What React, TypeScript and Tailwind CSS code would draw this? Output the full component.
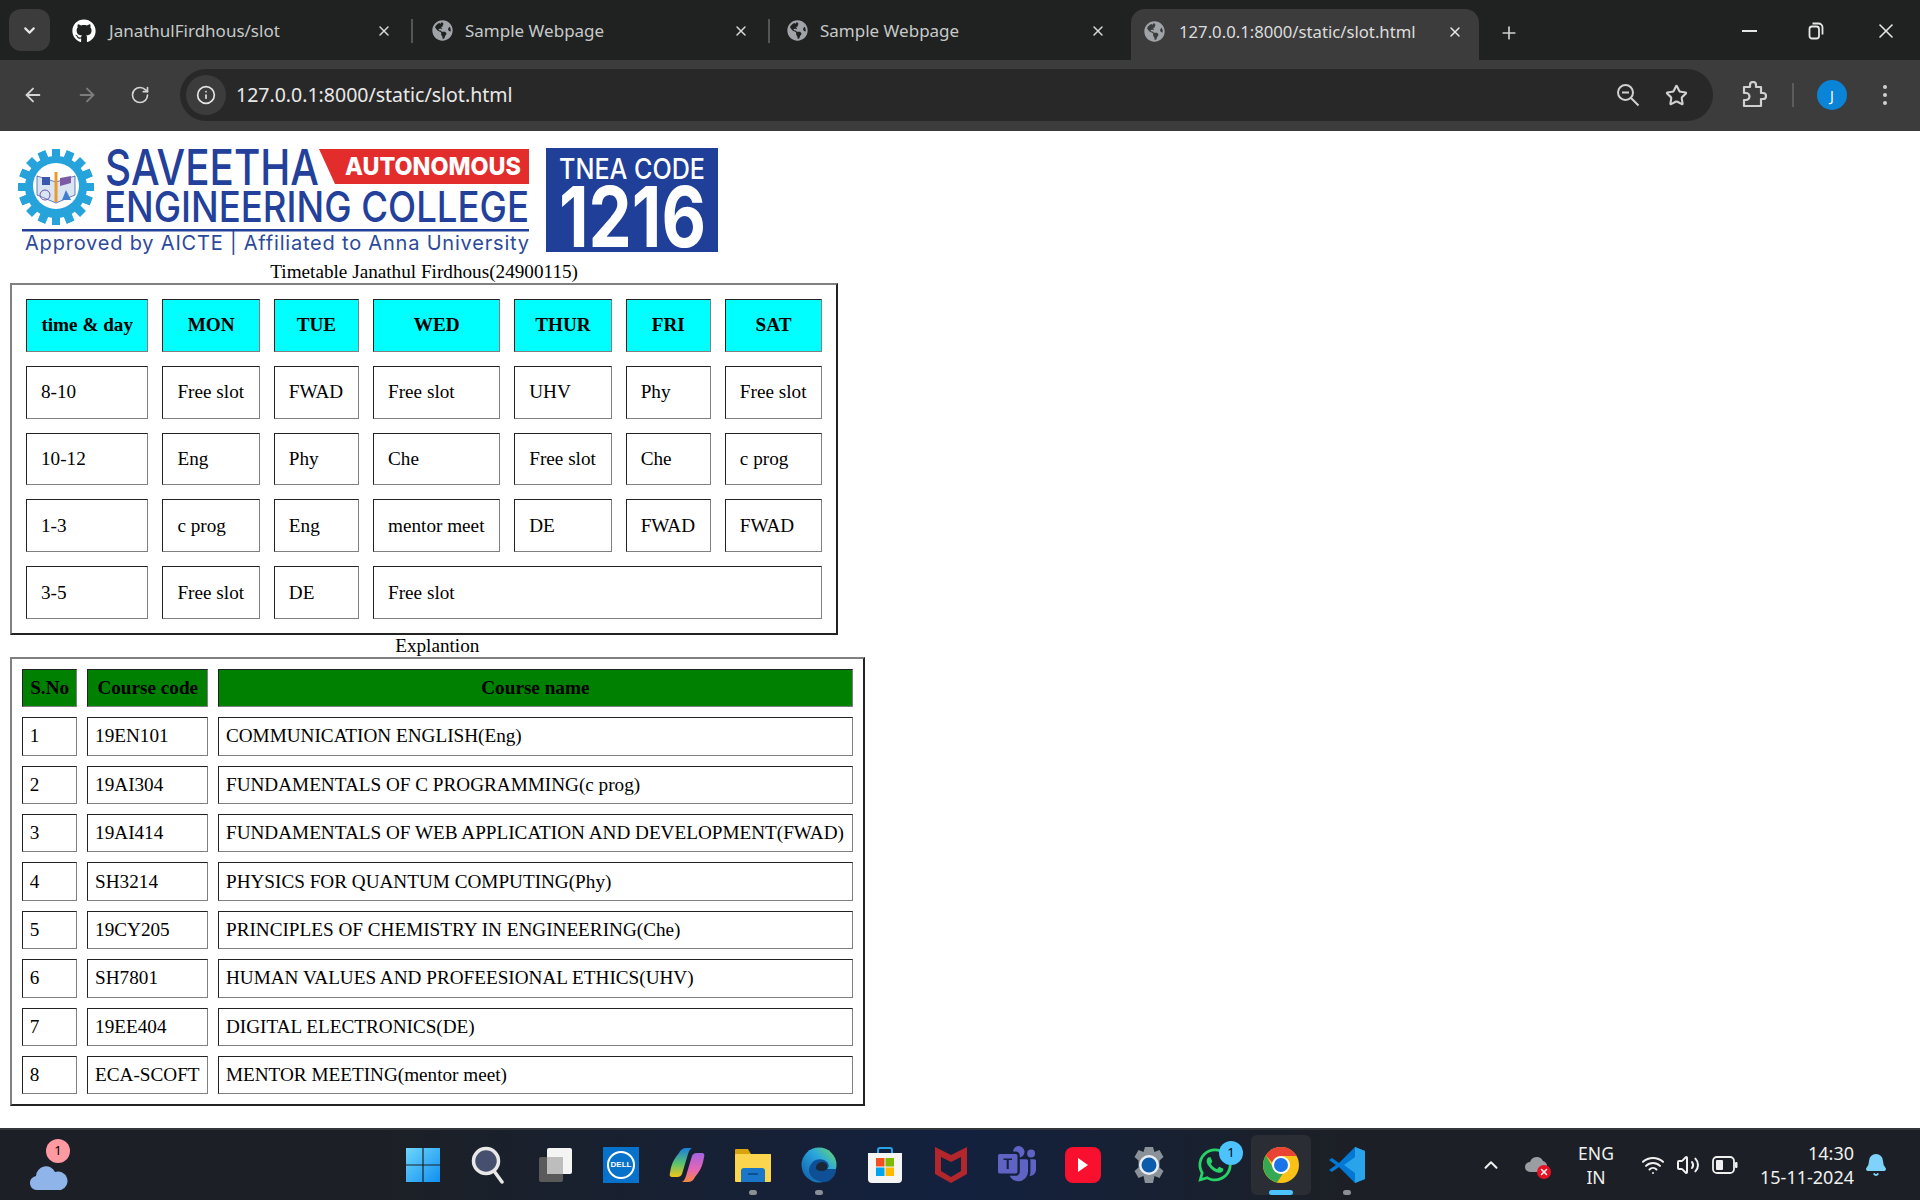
import React from 'react';
import { ArrowLeft, ArrowRight, Bell, ChevronDown, ChevronUp, Info, Plus, RotateCw, Star, Volume2, Wifi, X } from 'lucide-react';
import { FaGithub, FaGlobeAmericas, FaWhatsapp } from 'react-icons/fa';
import { BsMicrosoftTeams } from 'react-icons/bs';

const serif = "font-['Liberation_Serif','Times_New_Roman',serif]";
const ui = "font-['Noto_Sans','Open_Sans',sans-serif]";

const cellBorder = 'border border-t-[#222] border-l-[#222] border-r-[#808080] border-b-[#808080]';
const tableBorder = 'border-2 border-t-[#808080] border-l-[#808080] border-r-[#222] border-b-[#222]';

const timetable = [
  [['8-10'], ['Free slot'], ['FWAD'], ['Free slot'], ['UHV'], ['Phy'], ['Free slot']],
  [['10-12'], ['Eng'], ['Phy'], ['Che'], ['Free slot'], ['Che'], ['c prog']],
  [['1-3'], ['c prog'], ['Eng'], ['mentor meet'], ['DE'], ['FWAD'], ['FWAD']],
  [['3-5'], ['Free slot'], ['DE'], ['Free slot', 4]],
] as [string, number?][][];

const courses = [
  ['1', '19EN101', 'COMMUNICATION ENGLISH(Eng)'],
  ['2', '19AI304', 'FUNDAMENTALS OF C PROGRAMMING(c prog)'],
  ['3', '19AI414', 'FUNDAMENTALS OF WEB APPLICATION AND DEVELOPMENT(FWAD)'],
  ['4', 'SH3214', 'PHYSICS FOR QUANTUM COMPUTING(Phy)'],
  ['5', '19CY205', 'PRINCIPLES OF CHEMISTRY IN ENGINEERING(Che)'],
  ['6', 'SH7801', 'HUMAN VALUES AND PROFEESIONAL ETHICS(UHV)'],
  ['7', '19EE404', 'DIGITAL ELECTRONICS(DE)'],
  ['8', 'ECA-SCOFT', 'MENTOR MEETING(mentor meet)'],
];

const Tab = ({ title, icon, width, closeGap = 'mr-[19px]', sep = true }: { title: string; icon: React.ReactNode; width: string; closeGap?: string; sep?: boolean }) => (
  <div className={`flex h-[51px] items-center pb-[8px] pl-[19px] text-[#c7c9c9] ${width}`}>
    <span className="flex shrink-0">{icon}</span>
    <span className="flex-1 text-[17px]">{title}</span>
    <X size={16} strokeWidth={2.2} className={`text-[#d8d8d8] ${closeGap}`} />
    {sep && <span className="h-[24px] w-[2px] bg-[#555]" />}
  </div>
);

const ExtensionIcon = () => (
  <svg width="26" height="28" viewBox="0 0 26 28" fill="none" stroke="currentColor" strokeWidth="2.2" strokeLinejoin="round">
    <path d="M3 6h6V4a3 3 0 0 1 6 0v2h5v6h2a3 3 0 0 1 0 6h-2v7H3v-6h2a3.500 3.500 0 0 0 0-7H3z" />
  </svg>
);

const ZoomOutIcon = () => (
  <svg width="24" height="24" viewBox="0 0 24 24" fill="none" stroke="currentColor" strokeWidth="2">
    <circle cx="9.500" cy="9.500" r="7.500" />
    <path d="M6 9.500h7M15 15l7.500 7.500" />
  </svg>
);

const ChromeBar = () => (
  <div className={`${ui} shrink-0`}>
    <div className="flex h-[60px] items-end bg-[#202221] pl-[9px]">
      <div className="mb-[9px] flex h-[42px] w-[41px] items-center justify-center rounded-[12px] bg-[#3c3c3c]">
        <ChevronDown size={17} strokeWidth={3} className="text-[#e6e6e6]" />
      </div>
      <Tab title="JanathulFirdhous/slot" width="w-[363px]" icon={<FaGithub size={24} className="ml-[3px] mr-[13px] text-white" />} />
      <Tab title="Sample Webpage" width="w-[357px]" icon={<FaGlobeAmericas size={21} className="mr-[12px] text-[#a0a4a8]" />} />
      <Tab title="Sample Webpage" width="w-[361px]" closeGap="mr-[25px]" sep={false} icon={<FaGlobeAmericas size={21} className="ml-[-2px] mr-[12px] text-[#a0a4a8]" />} />
      <div className="flex h-[51px] w-[348px] items-center rounded-t-[14px] bg-[#3c3c3c] pb-[6px] pl-[13px] text-[#dcdcdc]">
        <span className="flex w-[24px] shrink-0"><FaGlobeAmericas size={21} className="text-[#a0a4a8]" /></span>
        <span className="ml-[11px] flex-1 text-[16.700px]">127.0.0.1:8000/static/slot.html</span>
        <X size={16} strokeWidth={2.2} className="mr-[16px] text-[#e8e8e8]" />
      </div>
      <Plus size={20} strokeWidth={2} className="mb-[17px] ml-[20px] text-[#cfcfcf]" />
      <div className="mb-[17px] ml-auto flex items-center text-[#e6e6e6]">
        <span className="mr-[51px] h-[2px] w-[15px] bg-[#e6e6e6]" />
        <svg width="16" height="18" viewBox="0 0 16 18" fill="none" stroke="currentColor" strokeWidth="1.8" className="mr-[50px]">
          <rect x="1.500" y="4.500" width="9.500" height="12" rx="2.500" />
          <path d="M4.500 1.500h6a4 4 0 0 1 4 4v7" />
        </svg>
        <X size={24} strokeWidth={1.600} className="mr-[22px]" />
      </div>
    </div>
    <div className="flex h-[71px] items-start bg-[#3c3c3c] pt-[9px]">
      <div className="flex h-[52px] w-[180px] items-center gap-[32px] pl-[22px] text-[#d4d4d4]">
        <ArrowLeft size={22} />
        <ArrowRight size={22} className="text-[#7d7d7d]" />
        <RotateCw size={20} />
      </div>
      <div className="flex h-[52px] w-[1533px] items-center rounded-full bg-[#282828] pl-[6px] pr-[25px]">
        <span className="flex h-[40px] w-[40px] items-center justify-center rounded-full bg-[#3c3c3c]">
          <Info size={20} className="text-[#e4e4e4]" />
        </span>
        <span className="ml-[10px] flex-1 text-[19.500px] text-[#e8e8e8]">127.0.0.1:8000/static/slot.html</span>
        <span className="mr-[25px] text-[#d0d0d0]"><ZoomOutIcon /></span>
        <Star size={23} strokeWidth={2.200} className="text-[#d0d0d0]" />
      </div>
      <div className="flex h-[52px] flex-1 items-center pl-[28px] text-[#d0d0d0]">
        <ExtensionIcon />
        <span className="ml-[25px] h-[24px] w-[2px] bg-[#5c5c5c]" />
        <span className="ml-[23px] flex h-[30px] w-[30px] items-center justify-center rounded-full bg-[#0a84d6] text-[14px] text-white">J</span>
        <span className="ml-[36px] flex flex-col gap-[4px]">
          <i className="h-[4px] w-[4px] rounded-full bg-[#d0d0d0]" />
          <i className="h-[4px] w-[4px] rounded-full bg-[#d0d0d0]" />
          <i className="h-[4px] w-[4px] rounded-full bg-[#d0d0d0]" />
        </span>
      </div>
    </div>
  </div>
);

const Logo = () => (
  <svg width="712" height="120" viewBox="10 141 712 120" className="block font-['Inter','Noto_Sans',sans-serif]">
    <g fill="#27a3dc">
      {Array.from({ length: 16 }, (_, i) => (
        <rect key={i} x="52" y="149" width="8" height="76" transform={`rotate(${i * 22.500} 56 187)`} />
      ))}
    </g>
    <circle cx="56" cy="187" r="31" fill="#27a3dc" />
    <circle cx="56" cy="186" r="23" fill="#fff" />
    <path d="M37 176l19 6 19-6v19l-19 8-19-8z" fill="#dbe4f3" stroke="#2c4a9a" strokeWidth="0.700" />
    <rect x="42" y="177" width="8" height="8" fill="#3857b0" />
    <path d="M60 178l11-2v7l-11 3z" fill="#7c5aa6" />
    <path d="M56 172v30" stroke="#e89b2a" strokeWidth="3" />
    <circle cx="45" cy="195" r="5" fill="none" stroke="#6a55a5" />
    <path d="M66 190l5 10h-9z" fill="#3f7fd0" />
    <text x="105" y="185" fontSize="50" fontWeight="500" fill="#23409a" textLength="214" lengthAdjust="spacingAndGlyphs">SAVEETHA</text>
    <path d="M319 149H529V184H335z" fill="#e32d2c" />
    <text x="345" y="175" fontSize="25" fontWeight="800" fill="#fff" textLength="176" lengthAdjust="spacingAndGlyphs">AUTONOMOUS</text>
    <text x="104" y="222" fontSize="42" fontWeight="500" fill="#23409a" textLength="425" lengthAdjust="spacingAndGlyphs">ENGINEERING COLLEGE</text>
    <rect x="22" y="229" width="507" height="2.500" fill="#23409a" />
    <text x="25" y="250" fontSize="20" fill="#2c4a9a" textLength="504" lengthAdjust="spacing">Approved by AICTE  |  Affiliated to Anna University</text>
    <rect x="546" y="148" width="172" height="104" fill="#1f3f99" />
    <text x="559" y="179" fontSize="28" fontWeight="500" fill="#fff" textLength="146" lengthAdjust="spacingAndGlyphs">TNEA CODE</text>
    <text x="559" y="247" fontSize="84" fontWeight="700" fill="#fff" textLength="147" lengthAdjust="spacingAndGlyphs">1216</text>
  </svg>
);

const Timetable = () => (
  <table className={`border-separate border-spacing-[14px] ${tableBorder}`}>
    <caption>Timetable Janathul Firdhous(24900115)</caption>
    <thead>
      <tr>
        {['time & day', 'MON', 'TUE', 'WED', 'THUR', 'FRI', 'SAT'].map(h => (
          <th key={h} className={`bg-[#00ffff] p-[14.400px] text-center font-bold ${cellBorder}`}>{h}</th>
        ))}
      </tr>
    </thead>
    <tbody>
      {timetable.map((row, i) => (
        <tr key={i}>
          {row.map(([text, span], j) => (
            <td key={j} colSpan={span} className={`py-[14.400px] pl-[14px] pr-[14.800px] ${cellBorder}`}>{text}</td>
          ))}
        </tr>
      ))}
    </tbody>
  </table>
);

const CourseTable = () => (
  <table className={`border-separate border-spacing-[10px] ${tableBorder}`}>
    <caption>Explantion</caption>
    <thead>
      <tr>
        {['S.No', 'Course code', 'Course name'].map(h => (
          <th key={h} className={`bg-[#008000] p-[7.200px] text-center font-bold ${cellBorder}`}>{h}</th>
        ))}
      </tr>
    </thead>
    <tbody>
      {courses.map(row => (
        <tr key={row[0]}>
          {row.map(text => (
            <td key={text} className={`py-[7.200px] pl-[6.800px] pr-[7.600px] ${cellBorder}`}>{text}</td>
          ))}
        </tr>
      ))}
    </tbody>
  </table>
);

const WindowsIcon = () => (
  <svg width="36" height="36" viewBox="0 0 36 36">
    <defs>
      <linearGradient id="win" x1="0" y1="0" x2="1" y2="1">
        <stop offset="0" stopColor="#6fd6fb" />
        <stop offset="1" stopColor="#0f8ff0" />
      </linearGradient>
    </defs>
    <path d="M1 1h16.400v16.400H1zM18.600 1H35v16.400H18.600zM1 18.600h16.400V35H1zM18.600 18.600H35V35H18.600z" fill="url(#win)" />
  </svg>
);

const SearchIcon = () => (
  <svg width="36" height="38" viewBox="0 0 36 38">
    <circle cx="15" cy="15" r="12.500" fill="#46506e" stroke="#e8e8e8" strokeWidth="3.500" />
    <path d="M23 25l8 11" stroke="#e8e8e8" strokeWidth="3.500" strokeLinecap="round" />
  </svg>
);

const TaskViewIcon = () => (
  <svg width="36" height="36" viewBox="0 0 36 36">
    <rect x="2" y="10" width="24" height="25" rx="2" fill="#5a5a5a" />
    <rect x="10" y="1" width="25" height="26" rx="2" fill="#f4f4f4" />
    <rect x="10" y="10" width="16" height="17" fill="#bdbdbd" />
  </svg>
);

const DellIcon = () => (
  <div className="flex h-[36px] w-[36px] items-center justify-center bg-[#0672cb]">
    <span className="flex h-[28px] w-[28px] items-center justify-center rounded-full border-2 border-white font-['Liberation_Sans',sans-serif] text-[8px] font-bold text-white">DELL</span>
  </div>
);

const CopilotIcon = () => (
  <svg width="36" height="36" viewBox="0 0 36 36">
    <defs>
      <linearGradient id="cop1" x1="0" y1="0" x2="0" y2="1">
        <stop offset="0" stopColor="#1b7de0" />
        <stop offset=".55" stopColor="#5cc46a" />
        <stop offset="1" stopColor="#f5c518" />
      </linearGradient>
      <linearGradient id="cop2" x1="0" y1="0" x2="0" y2="1">
        <stop offset="0" stopColor="#a663e0" />
        <stop offset=".6" stopColor="#e767b0" />
        <stop offset="1" stopColor="#f58a3c" />
      </linearGradient>
    </defs>
    <path d="M10 6c1-3 4-5 7-5h6c-2 1-3 3-4 6l-6 20c-1 2-2 3-5 3H3c-2 0-3-2-2-4 1-6 2-12 9-20z" fill="url(#cop1)" />
    <path d="M26 30c-1 3-4 5-7 5h-6c2-1 3-3 4-6l6-20c1-2 2-3 5-3h5c2 0 3 2 2 4-1 6-2 12-9 20z" fill="url(#cop2)" />
  </svg>
);

const FolderIcon = () => (
  <svg width="36" height="36" viewBox="0 0 36 36">
    <path d="M0 3a1 1 0 0 1 1-1h12l3 5h20v6H0z" fill="#d9a20f" />
    <rect x="0" y="7" width="36" height="28" rx="1" fill="#fcd54f" />
    <path d="M6 35V24a3 3 0 0 1 3-3h18a3 3 0 0 1 3 3v11z" fill="#1976c8" />
    <rect x="13" y="26" width="10" height="2" fill="#0d4f8f" />
  </svg>
);

const EdgeIcon = () => (
  <svg width="36" height="36" viewBox="0 0 36 36">
    <defs>
      <linearGradient id="edge" x1="0" y1="1" x2="1" y2="0">
        <stop offset="0" stopColor="#0c59a4" />
        <stop offset=".6" stopColor="#2aa6de" />
        <stop offset="1" stopColor="#6fdc5e" />
      </linearGradient>
    </defs>
    <circle cx="18" cy="18" r="17.500" fill="url(#edge)" />
    <path d="M8 24c0-9 8-14 15-11 5 2 6 7 3 9h9c0 6-3 9-7 12-9 3-19-2-20-10z" fill="#0e4f96" />
    <path d="M15 21c0-4 3-6 7-6 4 1 5 4 4 7-2 2-5 2-5 2-3 0-6-1-6-3z" fill="#1c2028" opacity="0.850" />
  </svg>
);

const StoreIcon = () => (
  <svg width="36" height="36" viewBox="0 0 36 36">
    <path d="M11 8V3a2 2 0 0 1 2-2h10a2 2 0 0 1 2 2v5" fill="none" stroke="#2aa4e8" strokeWidth="2" />
    <path d="M1 6h34v26a4 4 0 0 1-4 4H5a4 4 0 0 1-4-4z" fill="#f5f5f5" />
    <rect x="9" y="11" width="8.500" height="8.500" fill="#f25022" />
    <rect x="18.500" y="11" width="8.500" height="8.500" fill="#7fba00" />
    <rect x="9" y="20.500" width="8.500" height="8.500" fill="#00a4ef" />
    <rect x="18.500" y="20.500" width="8.500" height="8.500" fill="#ffb900" />
  </svg>
);

const McAfeeIcon = () => (
  <svg width="36" height="38" viewBox="0 0 36 38">
    <path d="M2 1l16 8 16-8v27L18 37 2 28zM8 11v14l10 6 10-6V11l-10 5z" fill="#b3262b" fillRule="evenodd" />
  </svg>
);

const YoutubeIcon = () => (
  <div className="flex h-[36px] w-[36px] items-center justify-center rounded-[8px] bg-[#f8102e]">
    <svg width="12" height="16" viewBox="0 0 12 16"><path d="M1 1l10 7-10 7z" fill="#fff" /></svg>
  </div>
);

const SettingsIcon = () => (
  <svg width="38" height="38" viewBox="0 0 38 38">
    <path d="M15 1h8l1.500 5 5-2 4 7-4 3.500v7L33.500 25l-4 7-5-2L23 37h-8l-1.500-7-5 2-4-7 4-3.500v-7L4.500 11l4-7 5 2z" fill="#8a9199" />
    <circle cx="19" cy="19" r="10" fill="#e8eef4" />
    <circle cx="19" cy="19" r="7.500" fill="#0d5cab" />
  </svg>
);

const ChromeIcon = () => (
  <svg width="36" height="36" viewBox="0 0 36 36">
    <circle cx="18" cy="18" r="18" fill="#fbc116" />
    <path d="M18 0a18 18 0 0 1 15.600 9H18a9 9 0 0 0-8.700 6.700L2.900 8.400A18 18 0 0 1 18 0z" fill="#ea4335" />
    <path d="M2.900 8.400l8.200 14.100a9 9 0 0 0 8.700 4.300L14 35.500A18 18 0 0 1 2.900 8.400z" fill="#34a853" />
    <circle cx="18" cy="18" r="9" fill="#fff" />
    <circle cx="18" cy="18" r="7" fill="#1a73e8" />
  </svg>
);

const VscodeIcon = () => (
  <svg width="36" height="38" viewBox="0 0 36 38">
    <path d="M26 1L10 17 3 12l-3 2 7 5-7 5 3 2 7-5 16 16 10-4V5z" fill="#0078d4" />
    <path d="M26 1l10 4v28l-10 4zM26 11L15 19l11 8z" fill="#29a3ea" fillRule="evenodd" />
  </svg>
);

const BatteryIcon = () => (
  <svg width="26" height="20" viewBox="0 0 26 20" fill="none">
    <rect x="1" y="2" width="21" height="16" rx="4" stroke="#f0f0f0" strokeWidth="1.800" />
    <rect x="4" y="5" width="7" height="10" rx="1" fill="#f0f0f0" />
    <rect x="23" y="7" width="2.500" height="6" rx="1" fill="#f0f0f0" />
  </svg>
);

const TaskIcon = ({ children, dot, active }: { children: React.ReactNode; dot?: boolean; active?: boolean }) => (
  <div className="relative flex h-[60px] w-[66px] items-center justify-center">
    {active && <span className="absolute inset-y-[0px] left-[3px] right-[3px] rounded-[6px] bg-[#2a2d33]" />}
    <span className="relative flex">{children}</span>
    {dot && <span className="absolute bottom-[0px] h-[5px] w-[8px] rounded-full bg-[#8b8f96]" />}
    {active && <span className="absolute bottom-[0px] h-[5px] w-[24px] rounded-full bg-[#4cc2ff]" />}
  </div>
);

const Badge = ({ n, className }: { n: string; className: string }) => (
  <span className={`absolute flex h-[24px] w-[24px] items-center justify-center rounded-full text-[13px] text-black ${className}`}>{n}</span>
);

const Taskbar = () => (
  <div className={`${ui} flex h-[72px] shrink-0 items-center border-t-2 border-[#33363a] bg-[linear-gradient(90deg,#1c2026_20%,#13213f_50%,#1c2026_70%)] text-[#f0f0f0]`}>
    <div className="relative ml-[30px] h-[52px] w-[360px] shrink-0">
      <svg width="38" height="30" viewBox="0 0 38 30" className="absolute bottom-[0px] left-[0px]">
        <path d="M8 29a7 7 0 0 1-2-14 10 10 0 0 1 19-4 9 9 0 0 1 6 18z" fill="#8fb4ea" />
      </svg>
      <Badge n="1" className="left-[16px] top-[0px] bg-[#ff9aa2]" />
    </div>
    <div className="flex items-center">
      <TaskIcon><WindowsIcon /></TaskIcon>
      <TaskIcon><SearchIcon /></TaskIcon>
      <TaskIcon><TaskViewIcon /></TaskIcon>
      <TaskIcon><DellIcon /></TaskIcon>
      <TaskIcon><CopilotIcon /></TaskIcon>
      <TaskIcon dot><FolderIcon /></TaskIcon>
      <TaskIcon dot><EdgeIcon /></TaskIcon>
      <TaskIcon><StoreIcon /></TaskIcon>
      <TaskIcon><McAfeeIcon /></TaskIcon>
      <TaskIcon><BsMicrosoftTeams size={38} className="text-[#5f63c4]" /></TaskIcon>
      <TaskIcon><YoutubeIcon /></TaskIcon>
      <TaskIcon><SettingsIcon /></TaskIcon>
      <TaskIcon>
        <FaWhatsapp size={38} className="text-[#25d366]" />
        <Badge n="1" className="left-[23px] top-[-5px] bg-[#4cc2ff]" />
      </TaskIcon>
      <TaskIcon active><ChromeIcon /></TaskIcon>
      <TaskIcon dot><VscodeIcon /></TaskIcon>
    </div>
    <div className="flex flex-1 items-center pl-[100px]">
      <ChevronUp size={22} strokeWidth={2.200} />
      <div className="relative ml-[23px] h-[24px] w-[26px]">
        <svg width="24" height="20" viewBox="0 0 24 20" className="absolute left-[0px] top-[1px]">
          <path d="M5 18a5 5 0 0 1 0-10 7 7 0 0 1 13-1 6 6 0 0 1 1 11z" fill="#9a9da1" />
        </svg>
        <span className="absolute bottom-[-2px] right-[0px] flex h-[14px] w-[14px] items-center justify-center rounded-full bg-[#e81123]">
          <X size={10} strokeWidth={3.500} className="text-white" />
        </span>
      </div>
      <div className="ml-[24px] w-[42px] text-center text-[17.500px] leading-[24px]">ENG<br />IN</div>
      <Wifi size={24} className="ml-[24px]" />
      <Volume2 size={24} className="ml-[11px]" />
      <span className="ml-[12px] flex"><BatteryIcon /></span>
      <div className="ml-[11px] w-[105px] text-right text-[18px] leading-[24px]">14:30<br />15-11-2024</div>
      <Bell size={24} fill="#7fd3fb" className="ml-[10px] text-[#7fd3fb]" />
    </div>
  </div>
);

export default function App() {
  return (
    <div className="flex h-[1200px] w-[1920px] flex-col overflow-hidden bg-white">
      <ChromeBar />
      <main className={`${serif} flex-1 pl-[10px] pt-[10px] text-[19.200px] leading-[22px] text-black`}>
        <Logo />
        <Timetable />
        <CourseTable />
      </main>
      <Taskbar />
    </div>
  );
}
